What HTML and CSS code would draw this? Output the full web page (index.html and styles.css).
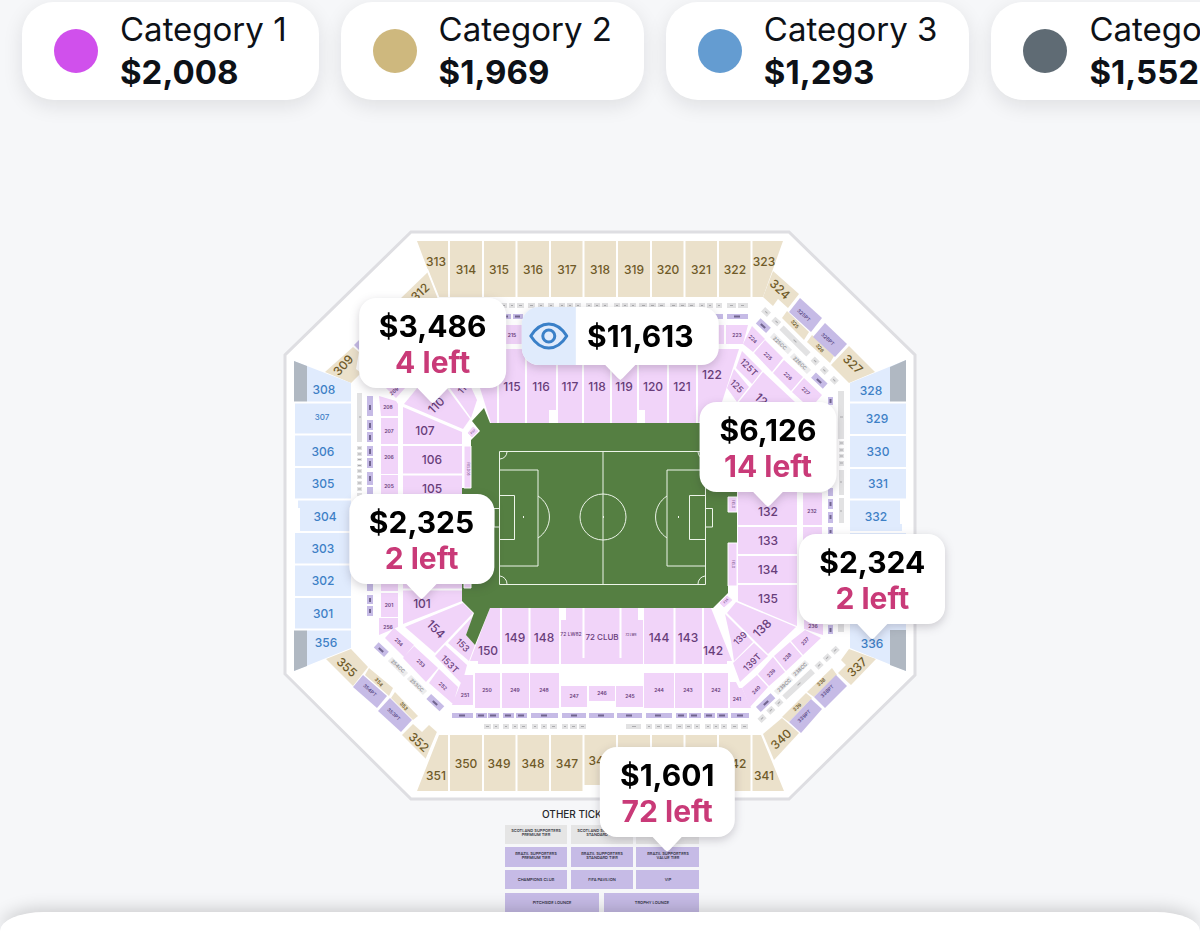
FILE: index.html
```html
<!DOCTYPE html>
<html lang="en">
<head>
<meta charset="utf-8">
<meta name="viewport" content="width=device-width, initial-scale=1">
<title>Stadium seat map</title>
<link rel="stylesheet" href="styles.css">
</head>
<body>
<nav class="categories" aria-label="Price categories">
  <button class="category" type="button"><span class="dot dot-magenta"></span><span class="category-text"><span class="category-name">Category 1</span><strong class="category-price">$2,008</strong></span></button>
  <button class="category" type="button"><span class="dot dot-gold"></span><span class="category-text"><span class="category-name">Category 2</span><strong class="category-price">$1,969</strong></span></button>
  <button class="category" type="button"><span class="dot dot-blue"></span><span class="category-text"><span class="category-name">Category 3</span><strong class="category-price">$1,293</strong></span></button>
  <button class="category" type="button"><span class="dot dot-slate"></span><span class="category-text"><span class="category-name">Category 4</span><strong class="category-price">$1,552</strong></span></button>
</nav>

<main class="map-area">
  <div class="stage">
    <svg class="map" viewBox="250 110 700 802" role="img" aria-label="Stadium seating plan">
      <path class="shell" d="M411 232H789L915 355V675L789 799H411L285 674V355Z"/>

      <!-- upper tier, category 2 -->
      <g class="tan">
        <path d="M417 241H783L763 297H438Z"/>
        <path d="M428 272L438 297 430 310 400 299Z"/>
        <path d="M325 372L353 347 359 352 356 369 361 373 351 383Z"/>
        <path d="M773 271L799 294 788 308 778 299 773 306 763 297Z"/>
        <path d="M787 311L809 332 804 340 782 318Z"/>
        <path d="M812 335L834 356 830 363 807 342Z"/>
        <path d="M849 346L875 372 849 383 831 365Z"/>
        <path d="M351 649L368 667 353 686 326 659Z"/>
        <path d="M369 668L393 688 389 696 365 675Z"/>
        <path d="M395 692L418 716 413 720 391 698Z"/>
        <path d="M413 724L422 732 429 725 438 733 427 760 402 735Z"/>
        <path d="M439 735H761L784 791H617V785H583V791H417Z"/>
        <path d="M782 718L799 733 774 760 763 734Z"/>
        <path d="M806 693L812 698 789 722 782 717Z"/>
        <path d="M832 668L837 675 814 697 807 692Z"/>
        <path d="M849 649L876 659 851 685 838 673 846 665 841 660Z"/>
      </g>
      <path class="seam" d="M449 240V298M483 240V298M516.500 240V298M550 240V298M583.500 240V298M617 240V298M651 240V298M684.500 240V298M718 240V298M751.500 240V298M449 734V792M483 734V792M516.500 734V792M550 734V792M583.500 734V792M617 734V792M651 734V792M684.500 734V792M718 734V792M751.500 734V792M427 269L439 299M438 732L425 763"/>
      <g class="violet">
        <path d="M359 340L354 345 359 350Z"/>
        <path d="M800 298L822 318 811 332 789 312Z"/>
        <path d="M825 323L847 344 835 357 813 337Z"/>
        <path d="M363 675L387 696 377 708 353 687Z"/>
        <path d="M390 698L412 720 401 732 378 711Z"/>
        <path d="M811 699L822 709 801 733 789 722Z"/>
        <path d="M836 675L847 686 825 708 814 697Z"/>
      </g>

      <!-- upper tier, category 3 -->
      <g class="sky">
        <path d="M294 361L351 383V402H294Z"/>
        <path d="M295 403H351V629H295V532H300V508H298V500H295Z"/>
        <path d="M294 630H351V648L294 671Z"/>
        <path d="M906 360L850 383V402H906Z"/>
        <path d="M850 403H906V500H900V524H902V532H906V620H850Z"/>
        <path d="M850 622H906V671L850 648Z"/>
      </g>
      <path class="steel" d="M294 361L307 366V402H294ZM294 630H307V666L294 671ZM906 360L890 367V402H906ZM906 630H890V665L906 671Z"/>
      <path class="seam" d="M293 402.500H352M293 434.500H352M293 467H352M293 499.500H352M293 532H352M293 564.500H352M293 597H352M293 629.500H352M849 402.500H907M849 435H907M849 468H907M849 499.500H907M849 532H907"/>

      <!-- lower tier, category 1 -->
      <g class="pink">
        <path d="M470 349H739L722 402 698 423H491L480 388Z"/>
        <path d="M742 351L762 371 752 384 736 368Z"/>
        <path d="M734 369L749 387 737 402 727 388Z"/>
        <path d="M763 372L796 403H738Z"/>
        <path d="M404 404L418 387H446L470 419 463 429Z"/>
        <path d="M449 387H471L477 400 471 418Z"/>
        <path d="M403 407L462 432V601L403 624Z"/>
        <path d="M463 603L473 613 435 653 405 627Z"/>
        <path d="M474 615L466 635 475 645 469 661 448 643Z"/>
        <path d="M445 645L467 665 462 684 435 656Z"/>
        <path d="M490 608H559V664H478V661H470Z"/>
        <path d="M566 608H638V620H643V664H561V620H566Z"/>
        <path d="M644 608H711L732 661H727V664H644Z"/>
        <path d="M738 480H797V626L738 601Z"/>
        <path d="M736 602L796 627 768 654 727 613Z"/>
        <path d="M725 614L753 642 734 661 731 641Z"/>
        <path d="M754 643L768 656 740 682 733 663Z"/>
        <path d="M500 325H724V344H500ZM726 325H748L743 344H726Z"/>
        <path d="M752 326L765 339 753 352 743 344ZM765 340L783 358 772 372 754 353ZM784 360L803 377 791 391 773 373ZM804 378L822 395 816 402H803L792 392Z"/>
        <path d="M386 388H405L396 398ZM379 396L396 401 398 404V416H381ZM381 418H398V444H381ZM381 446H398V474H381ZM381 475H398V591H381ZM381 593H398V617H381ZM379 618H398V627L379 635Z"/>
        <path d="M394 628L414 645 404 657 385 638ZM414 646L438 668 426 682 403 658ZM439 669L458 687 453 704 429 683ZM464 675H473V705H452Z"/>
        <path d="M475 673H500V708H475ZM502 673H529V708H502ZM530 673H559V708H530ZM561 686H587V707H561ZM589 686H615V701H589ZM616 686H643V707H616ZM644 673H674V708H644ZM675 673H702V708H675ZM704 673H728V708H704ZM730 682H736L739 688H742L751 708H730Z"/>
        <path d="M803 493H822V525H803ZM803 527H822V560H803ZM804 620H823V635L804 629ZM805 630L821 638 803 655 791 641ZM790 642L802 656 786 671 774 656ZM773 657L785 672 769 686 758 674ZM757 675L768 687 750 707 742 688Z"/>
      </g>
      <path class="seam" d="M498 348V424M526 348V424M557 348V424M583 348V424M611 348V424M638 348V424M668 348V424M697 348V424M402 445H463M402 474.500H463M402 589.500H463M501 607V665M529.500 607V665M583.500 607V658M620.500 607V658M674.500 607V665M703 607V665M737 526H798M737 555H798M737 584H798"/>
      <path class="gap" d="M549 410H557V423H549ZM637 410H645V423H637Z"/>

      <!-- playing field -->
      <path class="grass" d="M484 408L490 423H728L737 432V543H728V593L713 608H490L475 645 466 635 474 613 462 601V488H471V440L480 431 472 421Z"/>
      <path class="strip" d="M464 446H471V488H464ZM728 497H737V512H728ZM728 543H737V586H728ZM464 583H471V588H464ZM473 426L479 431 472 438 467 433ZM727 595L733 600 724 608 719 603Z"/>
      <g class="pitch">
        <path d="M499.500 451.500H705.500V584.500H499.500ZM603 451V584M500 470H538V566H500M500 495.500H514.500V539.500H500M499 508.500H494V527H499M705 470H667V566H705M705 495.500H689.500V539.500H705M706 508.500H712.500V527H706"/>
        <circle cx="603" cy="517" r="23"/>
        <path d="M538 496A25 25 0 0 1 538 538M667 496A25 25 0 0 0 667 538M507 452A8 8 0 0 1 500 459M698 452A8 8 0 0 0 705 459M500 576A8 8 0 0 1 507 584M705 576A8 8 0 0 0 698 584"/>
        <path class="spots" d="M523 517h1M603 517h1M678 517h1"/>
      </g>

      <!-- suites -->
      <path class="violet" d="M499 314H511V319H499ZM513 314H523V319H513ZM714 314H723V319H714ZM727 314H748V319H727ZM452 713H473V718H452ZM476 713H487V718H476ZM488 713H499V718H488ZM503 713H514V718H503ZM516 713H527V718H516ZM531 713H558V718H531ZM562 713H586V718H562ZM589 713H614V718H589ZM617 713H642V718H617ZM646 713H672V718H646ZM676 713H687V718H676ZM689 713H701V718H689ZM704 713H715V718H704ZM717 713H728V718H717ZM731 713H749V718H731Z"/>
      <path class="violet" d="M367 396H373V416H367ZM367 420H373V430H367ZM367 432H373V442H367ZM367 446H373V456H367ZM367 458H373V468H367ZM367 472H373V485H367ZM367 487H373V496H367ZM367 584H373V591H367ZM367 595H373V604H367ZM367 606H373V616H367ZM828 397H833V405H828ZM828 488H833V496H828ZM828 499H833V509H828ZM828 512H833V523H828ZM828 527H833V536H828ZM828 625H833V634H828Z"/>
      <path class="grey" d="M357 393H362V442H357ZM357 446h5v4h-5zM357 452h5v4h-5zM357 458h5v3h-5zM357 464h5v3h-5zM357 469h5v4h-5zM357 475h5v4h-5zM357 481h5v4h-5zM357 487h5v4h-5zM357 493h5v3h-5zM838 391H844V439H838ZM839 441h5v4h-5zM839 448h5v4h-5zM839 454h5v4h-5zM839 461h5v5h-5zM839 470H844V495H839ZM839 498H844V523H839ZM838 624H844V632H838Z"/>
      <path class="grey" d="M501 303h6v5h-6zM509 303h6v5h-6zM517 303h7v5h-7zM528 303h7v5h-7zM538 303h6v5h-6zM548 303h6v5h-6zM559 303h6v5h-6zM567 303h6v5h-6zM575 303h6v5h-6zM586 303h6v5h-6zM594 303h6v5h-6zM602 303h6v5h-6zM614 303h6v5h-6zM622 303h6v5h-6zM630 303h6v5h-6zM639 303h8v5h-8zM649 303h7v5h-7zM658 303h7v5h-7zM670 303h7v5h-7zM679 303h7v5h-7zM688 303h7v5h-7zM699 303h6v5h-6zM707 303h6v5h-6zM716 303h6v5h-6zM727 303h9v5h-9zM738 303h10v5h-10z"/>
      <path class="grey" d="M484 724h7v5h-7zM493 724h6v5h-6zM503 724h6v5h-6zM512 724h6v5h-6zM520 724h7v5h-7zM532 724h6v5h-6zM541 724h6v5h-6zM550 724h7v5h-7zM562 724h6v5h-6zM570 724h7v5h-7zM579 724h7v5h-7zM626 724h15v5h-15zM646 724h6v5h-6zM655 724h7v5h-7zM664 724h8v5h-8zM676 724h7v5h-7zM685 724h7v5h-7zM694 724h6v5h-6zM705 724h6v5h-6zM713 724h6v5h-6zM721 724h6v5h-6zM731 724h7v5h-7zM741 724h7v5h-7z"/>
      <path class="ticks" d="M503 305.500h2M511 305.500h2M519 305.500h3M530 305.500h3M540 305.500h2M550 305.500h2M561 305.500h2M569 305.500h2M577 305.500h2M588 305.500h2M596 305.500h2M604 305.500h2M616 305.500h2M624 305.500h2M632 305.500h2M642 305.500h3M651 305.500h3M660 305.500h3M672 305.500h3M681 305.500h3M690 305.500h3M701 305.500h2M709 305.500h2M718 305.500h2M730 305.500h3M741 305.500h3M486 726.500h3M495 726.500h2M505 726.500h2M514 726.500h2M522 726.500h3M534 726.500h2M543 726.500h2M552 726.500h3M564 726.500h2M572 726.500h3M581 726.500h3M632 726.500h4M648 726.500h2M657 726.500h3M666 726.500h3M678 726.500h3M687 726.500h3M696 726.500h2M707 726.500h2M715 726.500h2M723 726.500h2M733 726.500h3M743 726.500h3M358 448h3M358 454h3M358 459.500h3M358 465.500h3M358 471h3M358 477h3M358 483h3M358 489h3M840 443h3M840 450h3M840 456h3M840 463h3M359 417h2M840 417h3M840 482h2M840 511h2"/>
      <path class="ticks ticks-dark" d="M503 316.500h5M515 316.500h5M734 316.500h6M459 715.500h6M478 715.500h6M490 715.500h6M505 715.500h6M518 715.500h6M541 715.500h6M571 715.500h6M598 715.500h6M626 715.500h6M655 715.500h6M678 715.500h6M691 715.500h6M706 715.500h6M719 715.500h6M737 715.500h6M370 405v5M370 423v5M370 435v5M370 449v5M370 461v5M370 476v5M370 598v4M370 609v4M830.500 399v4M830.500 502v4M830.500 515v4M830.500 530v3M830.500 628v4"/>
      <g transform="translate(766 312) rotate(43)"><path class="grey" d="M-4-3h8v6h-8zM10-3h8v6h-8z"/><path class="ticks" d="M-1 0h3M13 0h3"/></g>
      <g transform="translate(795 341) rotate(45)"><path class="grey" d="M-19-3h38v6h-38zM25-3h7v6h-7zM38-3h7v6h-7zM52-3h7v6h-7z"/><path class="ticks" d="M-2 0h4M27 0h3M40 0h3M54 0h3"/></g>
      <g transform="translate(799 684) rotate(-43)"><path class="grey" d="M-20-3h39v6h-39zM24-3h7v6h-7zM35-3h7v6h-7zM46-3h7v6h-7zM-31-3h7v6h-7zM-42-3h7v6h-7zM-54-3h7v6h-7z"/><path class="ticks" d="M-2 0h4M26 0h3M37 0h3M48 0h3M-29 0h3M-40 0h3M-52 0h3"/></g>
      <g transform="translate(763 326) rotate(43)"><path class="violet" d="M-7-4h14v7h-14z"/><path class="ticks ticks-dark" d="M-3 0h6"/></g>
      <g transform="translate(819 381) rotate(43)"><path class="violet" d="M-8-4h16v7h-16z"/><path class="ticks ticks-dark" d="M-3 0h6"/></g>
      <g transform="translate(766 703) rotate(-43)"><path class="violet" d="M-10-4h20v7h-20z"/><path class="ticks ticks-dark" d="M-3 0h6"/></g>
      <g transform="translate(381 650) rotate(43)"><path class="violet" d="M-7-4h14v7h-14z"/><path class="ticks ticks-dark" d="M-3 0h6"/></g>
      <g transform="translate(435 703) rotate(43)"><path class="violet" d="M-9-4h18v7h-18z"/><path class="ticks ticks-dark" d="M-3 0h6"/></g>
      <g class="cc">
        <path d="M772 335L790 352M792 355L809 372M390 659L406 675M409 677L425 693M776 693L791 678M793 676L807 662"/>
      </g>

      <g class="label label-tan">
        <text x="436" y="261">313</text><text x="466" y="269">314</text><text x="499" y="269">315</text><text x="533" y="269">316</text><text x="567" y="269">317</text><text x="600" y="269">318</text><text x="634" y="269">319</text><text x="668" y="269">320</text><text x="701" y="269">321</text><text x="735" y="269">322</text><text x="764" y="261">323</text>
        <text transform="translate(420 292) rotate(-43)">312</text><text transform="translate(343 365) rotate(-47)">309</text><text transform="translate(780 289) rotate(43)">324</text><text transform="translate(853 364) rotate(43)">327</text>
        <text transform="translate(347 667) rotate(43)">355</text><text transform="translate(419 742) rotate(43)">352</text><text transform="translate(781 739) rotate(-43)">340</text><text transform="translate(857 667) rotate(-43)">337</text>
        <text x="436" y="775">351</text><text x="466" y="763">350</text><text x="499" y="763">349</text><text x="533" y="763">348</text><text x="567" y="763">347</text><text x="600" y="760">346</text><text x="735" y="763">342</text><text x="764" y="775">341</text>
      </g>
      <g class="label label-tan small">
        <text transform="translate(795 324) rotate(50)">325</text><text transform="translate(820 348) rotate(50)">326</text><text transform="translate(379 682) rotate(50)">354</text><text transform="translate(404 706) rotate(50)">353</text><text transform="translate(797 707) rotate(-43)">339</text><text transform="translate(821 682) rotate(-43)">338</text>
      </g>
      <g class="label label-violet small">
        <text transform="translate(804 315) rotate(43)">325PT</text><text transform="translate(828 339) rotate(43)">326PT</text><text transform="translate(370 690) rotate(43)">354PT</text><text transform="translate(394 714) rotate(43)">353PT</text><text transform="translate(804 716) rotate(-43)">339PT</text><text transform="translate(827 691) rotate(-43)">338PT</text>
      </g>
      <g class="label label-grey small">
        <text transform="translate(780 343) rotate(43)">225CC</text><text transform="translate(800 363) rotate(43)">226CC</text><text transform="translate(398 666) rotate(43)">254CC</text><text transform="translate(417 685) rotate(43)">253CC</text><text transform="translate(784 685) rotate(-43)">239CC</text><text transform="translate(800 669) rotate(-43)">238CC</text>
      </g>
      <g class="label label-sky">
        <text x="324" y="389">308</text><text class="compact" x="322" y="417">307</text><text x="323" y="451">306</text><text x="323" y="483">305</text><text x="325" y="516">304</text><text x="323" y="548">303</text><text x="323" y="580">302</text><text x="323" y="613">301</text><text x="326" y="642">356</text>
        <text x="871" y="390">328</text><text x="877" y="418">329</text><text x="878" y="451">330</text><text x="878" y="483">331</text><text x="876" y="516">332</text><text x="872" y="643">336</text>
      </g>
      <g class="label label-pink">
        <text x="512" y="386">115</text><text x="541" y="386">116</text><text x="570" y="386">117</text><text x="597" y="386">118</text><text x="624" y="386">119</text><text x="653" y="386">120</text><text x="682" y="386">121</text><text x="712" y="374">122</text>
        <text x="425" y="430">107</text><text x="432" y="459">106</text><text x="432" y="488">105</text><text x="422" y="603">101</text>
        <text x="488" y="650">150</text><text x="515" y="637">149</text><text x="544" y="637">148</text><text x="659" y="637">144</text><text x="688" y="637">143</text><text x="713" y="650">142</text>
        <text x="768" y="511">132</text><text x="768" y="540">133</text><text x="768" y="569">134</text><text x="768" y="598">135</text>
        <text transform="translate(436 405) rotate(-45)">110</text><text transform="translate(436 629) rotate(45)">154</text><text transform="translate(762 628) rotate(-45)">138</text><text transform="translate(764 402) rotate(45)">126</text>
      </g>
      <g class="label label-pink mid">
        <text transform="translate(463 388) rotate(-50)">111</text><text transform="translate(749 367) rotate(45)">125T</text><text transform="translate(737 386) rotate(45)">125</text><text transform="translate(463 645) rotate(45)">153</text><text transform="translate(450 664) rotate(45)">153T</text><text transform="translate(740 638) rotate(-45)">139</text><text transform="translate(752 662) rotate(-45)">139T</text>
      </g>
      <g class="label label-pink compact">
        <text x="602" y="637">72 CLUB</text>
      </g>
      <g class="label label-pink small">
        <text class="narrow" x="571" y="634">72 LW82</text><text class="tiny" x="631" y="635">72 LW8</text>
        <text x="512" y="335">215</text><text x="737" y="335">223</text>
        <text transform="translate(753 339) rotate(45)">224</text><text transform="translate(768 356) rotate(45)">225</text><text transform="translate(788 376) rotate(45)">226</text><text transform="translate(806 391) rotate(45)">227</text>
        <text transform="translate(394 391) rotate(-40)">209</text><text x="388" y="407">208</text><text x="389" y="431">207</text><text x="389" y="457">206</text><text x="389" y="486">205</text><text x="389" y="605">201</text><text x="388" y="627">256</text>
        <text transform="translate(399 642) rotate(45)">254</text><text transform="translate(421 663) rotate(45)">253</text><text transform="translate(443 686) rotate(45)">252</text><text x="465" y="695">251</text>
        <text x="487" y="690">250</text><text x="515" y="690">249</text><text x="544" y="690">248</text><text x="574" y="696">247</text><text x="602" y="693">246</text><text x="630" y="696">245</text><text x="659" y="690">244</text><text x="688" y="690">243</text><text x="716" y="690">242</text><text x="737" y="699">241</text>
        <text x="812" y="511">232</text><text x="813" y="626">236</text><text transform="translate(805 641) rotate(-45)">237</text><text transform="translate(787 657) rotate(-45)">238</text><text transform="translate(771 673) rotate(-45)">239</text><text transform="translate(756 690) rotate(-45)">240</text>
      </g>
      <g class="label label-pink tiny">
        <text transform="translate(468 469) rotate(90)">FIELD 06</text><text transform="translate(733 504) rotate(90)">FIELD</text><text transform="translate(733 564) rotate(90)">FIELD</text><text transform="translate(473 432) rotate(-45)">F07</text><text transform="translate(726 601) rotate(-45)">F35</text>
      </g>

      <!-- tickets sold outside the seating bowl -->
      <text class="other-title" x="542" y="818">OTHER TICKETS</text>
      <path class="other-grey" d="M505 825H567V844H505ZM571 825H633V844H571ZM636 825H699V844H636Z"/>
      <path class="violet" d="M505 847H567V867H505ZM571 847H633V867H571ZM636 847H699V867H636ZM505 870H567V889H505ZM571 870H633V889H571ZM636 870H699V889H636ZM505 893H599V912H505ZM604 893H699V912H604Z"/>
      <g class="label other-label">
        <text x="536" y="830">SCOTLAND SUPPORTERS</text><text x="536" y="834">PREMIUM TIER</text><text x="602" y="830">SCOTLAND SUPPORTERS</text><text x="602" y="834">STANDARD TIER</text>
        <text x="536" y="853">BRAZIL SUPPORTERS</text><text x="536" y="857">PREMIUM TIER</text><text x="602" y="853">BRAZIL SUPPORTERS</text><text x="602" y="857">STANDARD TIER</text><text x="668" y="853">BRAZIL SUPPORTERS</text><text x="668" y="857">VALUE TIER</text>
        <text x="536" y="879">CHAMPIONS CLUB</text><text x="602" y="879">FIFA PAVILION</text><text x="668" y="879">VIP</text>
        <text x="552" y="902">PITCHSIDE LOUNGE</text><text x="652" y="902">TROPHY LOUNGE</text>
      </g>
    </svg>

    <button class="pin pin-110" type="button"><span class="price">$3,486</span><span class="left">4 left</span></button>
    <button class="pin pin-119" type="button">
      <span class="view"><svg class="eye" viewBox="0 0 40 28" aria-hidden="true"><path d="M2 14C7 6 13 2 20 2s13 4 18 12c-5 8-11 12-18 12S7 22 2 14Z"/><circle cx="20" cy="14" r="6"/></svg></span>
      <span class="price">$11,613</span>
    </button>
    <button class="pin pin-132" type="button"><span class="price">$6,126</span><span class="left">14 left</span></button>
    <button class="pin pin-101" type="button"><span class="price">$2,325</span><span class="left">2 left</span></button>
    <button class="pin pin-336" type="button"><span class="price">$2,324</span><span class="left">2 left</span></button>
    <button class="pin pin-value" type="button"><span class="price">$1,601</span><span class="left">72 left</span></button>
  </div>
</main>
<footer class="sheet"></footer>
</body>
</html>
```
FILE: styles.css
```css
* { box-sizing: border-box; }

body {
  margin: 0;
  min-height: 100vh;
  display: flex;
  flex-direction: column;
  overflow-x: hidden;
  background: #f6f7f9;
  color: #0d1117;
  font-family: Inter, "Liberation Sans", sans-serif;
}

button {
  border: 0;
  font: inherit;
  color: inherit;
  cursor: pointer;
}

.categories {
  display: flex;
  gap: 22px;
  padding: 2px 22px 10px;
  overflow-x: clip;
}

.category {
  flex: none;
  display: flex;
  align-items: center;
  gap: 22px;
  height: 98px;
  padding: 0 32px;
  border-radius: 32px;
  background: #fff;
  box-shadow: 0 6px 20px rgba(20, 22, 30, 0.1);
  text-align: left;
}

.dot {
  width: 44px;
  height: 44px;
  border-radius: 50%;
}
.dot-magenta { background: #d050ec; }
.dot-gold { background: #ceb87e; }
.dot-blue { background: #649cd1; }
.dot-slate { background: #5f6b74; }

.category-text {
  display: flex;
  flex-direction: column;
  font-size: 33px;
  line-height: 43px;
}
.category-price { font-weight: 700; }

.map-area {
  flex: 1;
  display: flex;
  justify-content: center;
}

.stage {
  position: relative;
  width: 700px;
  max-width: 100%;
  align-self: flex-start;
}

.map {
  display: block;
  width: 100%;
  height: auto;
}

.shell { fill: #fff; stroke: #dedee2; stroke-width: 3; }
.tan { fill: #ebe1cb; }
.sky { fill: #e0ebfd; }
.pink, .strip { fill: #f1d4f9; }
.strip { stroke: #fff; stroke-width: 1; }
.violet { fill: #c6bbe6; }
.steel { fill: #b0b8c2; }
.grey { fill: #e2e2e3; }
.cc { fill: none; stroke: #ececed; stroke-width: 6; }
.grass { fill: #557f42; }
.gap { fill: #fff; }
.seam { fill: none; stroke: #fff; stroke-width: 2; }
.pitch { fill: none; stroke: #edf5e9; stroke-width: 1; }
.spots { stroke-width: 2; }
.ticks { fill: none; stroke: #aaaaad; stroke-width: 1; }
.ticks-dark { stroke: #71658f; stroke-width: 2; }

.label {
  font-size: 12px;
  font-weight: 500;
  text-anchor: middle;
  dominant-baseline: central;
}
.label-tan { fill: #6f5a28; }
.label-sky { fill: #3e80c6; }
.label-pink { fill: #683d7a; }
.label-violet { fill: #5b4b86; }
.label-grey { fill: #929296; }
.mid { font-size: 9px; }
.compact { font-size: 8px; }
.small { font-size: 5px; font-weight: 600; }
.narrow { font-weight: 500; }
.tiny { font-size: 3px; }

.other-title { font-size: 10px; font-weight: 500; fill: #26272b; }
.other-grey { fill: #e5e5e5; }
.other-label { font-size: 4px; font-weight: 500; fill: #221d2e; }
.label.other-label { font-size: 4px; }

.pin {
  position: absolute;
  display: flex;
  flex-direction: column;
  align-items: center;
  padding: 10px 20px 8px;
  border-radius: 17px;
  background: #fff;
  color: #000;
  font-size: 30px;
  font-weight: 700;
  line-height: 36px;
  white-space: nowrap;
  transform: translate(-50%, -100%);
  filter: drop-shadow(0 3px 5px rgba(30, 20, 40, 0.2));
}
.pin::after {
  content: "";
  position: absolute;
  top: 100%;
  left: 50%;
  width: 32px;
  height: 16px;
  margin: -1px 0 0 -16px;
  background: #fff;
  clip-path: polygon(0 0, 100% 0, 58% 88%, 50% 100%, 42% 88%);
}
.left { color: #c93a78; }

.pin-110 { left: 26.1%; top: 34.7%; }
.pin-119 {
  left: 52.9%;
  top: 31.8%;
  flex-direction: row;
  align-items: stretch;
  gap: 11px;
  padding: 0 25px 0 0;
  line-height: 58px;
}
.pin-132 { left: 74%; top: 47.6%; }
.pin-101 { left: 24.5%; top: 59.1%; }
.pin-336 { left: 88.9%; top: 64.1%; }
.pin-value { left: 59.6%; top: 90.6%; }

.view {
  display: flex;
  align-items: center;
  justify-content: center;
  width: 54px;
  border-radius: 17px 0 0 17px;
  background: #e0ebfc;
}
.eye {
  width: 40px;
  height: 28px;
  fill: none;
  stroke: #3a80c8;
  stroke-width: 3;
  stroke-linejoin: round;
}

.sheet {
  position: relative;
  height: 19px;
  border-radius: 44px 44px 0 0 / 19px 19px 0 0;
  background: #fff;
  box-shadow: 0 -2px 18px rgba(0, 0, 0, 0.2);
}
```
